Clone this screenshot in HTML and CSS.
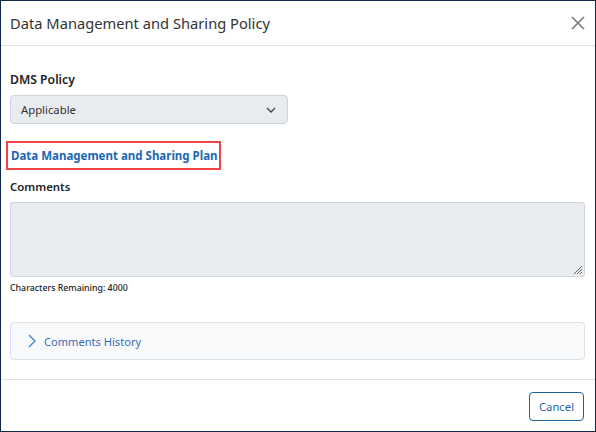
FILE: index.html
```html
<!DOCTYPE html>
<html>
<head>
<meta charset="utf-8">
<link rel="stylesheet" href="styles.css">
</head>
<body>
<div class="modal">
  <div class="modal-header">
    <div class="modal-title">Data Management and Sharing Policy</div>
    <button class="close" aria-label="Close">
      <svg width="14" height="14" viewBox="0 0 14 14"><path d="M1 1L13 13M13 1L1 13" stroke="#7a7a7a" stroke-width="1.6" fill="none"/></svg>
    </button>
  </div>
  <div class="modal-body">
    <div class="label">DMS Policy</div>
    <div class="select">
      <span>Applicable</span>
      <svg width="10" height="6" viewBox="0 0 10 6"><path d="M1 1L5 5L9 1" stroke="#444" stroke-width="1.3" fill="none"/></svg>
    </div>
    <div class="plan-wrap"><a class="plan-link">Data Management and Sharing Plan</a></div>
    <div class="label comments-label">Comments</div>
    <div class="textarea">
      <svg class="grip" width="10" height="10" viewBox="0 0 10 10"><path d="M9 1L1 9M9 4L4 9M9 7L7 9" stroke="#555" stroke-width="0.9" fill="none"/></svg>
    </div>
    <div class="remaining">Characters Remaining: 4000</div>
    <div class="accordion">
      <svg width="8" height="14" viewBox="0 0 8 14"><path d="M1 1L7 7L1 13" stroke="#3d7fd0" stroke-width="1.3" fill="none"/></svg>
      <span>Comments History</span>
    </div>
  </div>
  <div class="modal-footer">
    <button class="btn">Cancel</button>
  </div>
</div>
</body>
</html>
```
FILE: styles.css
```css
html, body { margin: 0; padding: 0; }
body { font-family: "Noto Sans", "Open Sans", sans-serif; color: #212529; }
.modal {
  width: 596px; height: 432px; box-sizing: border-box;
  border: 1px solid #0b2a4a; background: #fff;
  display: flex; flex-direction: column;
}
.modal-header {
  height: 44px; border-bottom: 1px solid #dee2e6;
  display: flex; align-items: center; justify-content: space-between;
  padding: 0 10px 0 9px;
}
.modal-title { font-size: 14.7px; color: #333; }
.close { border: 0; background: none; padding: 0; display: flex; }
.modal-body { padding: 26px 10px 0 9px; flex: 1; }
.label { font-size: 12.2px; font-weight: 600; color: #222; line-height: 16px; }
.select {
  margin-top: 7px; width: 278px; height: 29px; box-sizing: border-box;
  background: #e9ecef; border: 1px solid #ced4da; border-radius: 4px;
  display: flex; align-items: center; justify-content: space-between;
  padding: 0 11px 0 10px; font-size: 11.3px; color: #333;
}
.plan-wrap {
  margin: 17px 0 0 -4px; width: 215px; height: 29px; box-sizing: border-box;
  border: 2px solid #ef4444; display: flex; align-items: center; padding-left: 3px;
}
.plan-link { font-size: 11.5px; font-weight: 700; color: #1b67b5; white-space: nowrap; }
.comments-label { margin-top: 9px; font-size: 11.4px; }
.textarea {
  margin-top: 7px; height: 75px; box-sizing: border-box;
  background: #e9ecef; border: 1px solid #ced4da; border-radius: 3px;
  position: relative;
}
.grip { position: absolute; right: 1px; bottom: 1px; }
.remaining { font-size: 8.8px; font-weight: 500; color: #222; margin-top: 5px; line-height: 12px; }
.accordion {
  margin-top: 28px; height: 38px; box-sizing: border-box;
  background: #f8f9fa; border: 1px solid #dee2e6; border-radius: 4px;
  display: flex; align-items: center; gap: 8px; padding-left: 17px;
  font-size: 11.1px; color: #3a6bb5;
}
.modal-footer {
  border-top: 1px solid #dee2e6; height: 51px;
  display: flex; align-items: center; justify-content: flex-end; padding-right: 11px;
}
.btn {
  font-family: inherit; font-size: 11.3px; color: #1f64ad;
  background: #fff; border: 1px solid #1f5f9e; border-radius: 4px;
  width: 55px; height: 29px; padding: 0; margin-top: 2px;
}
```
